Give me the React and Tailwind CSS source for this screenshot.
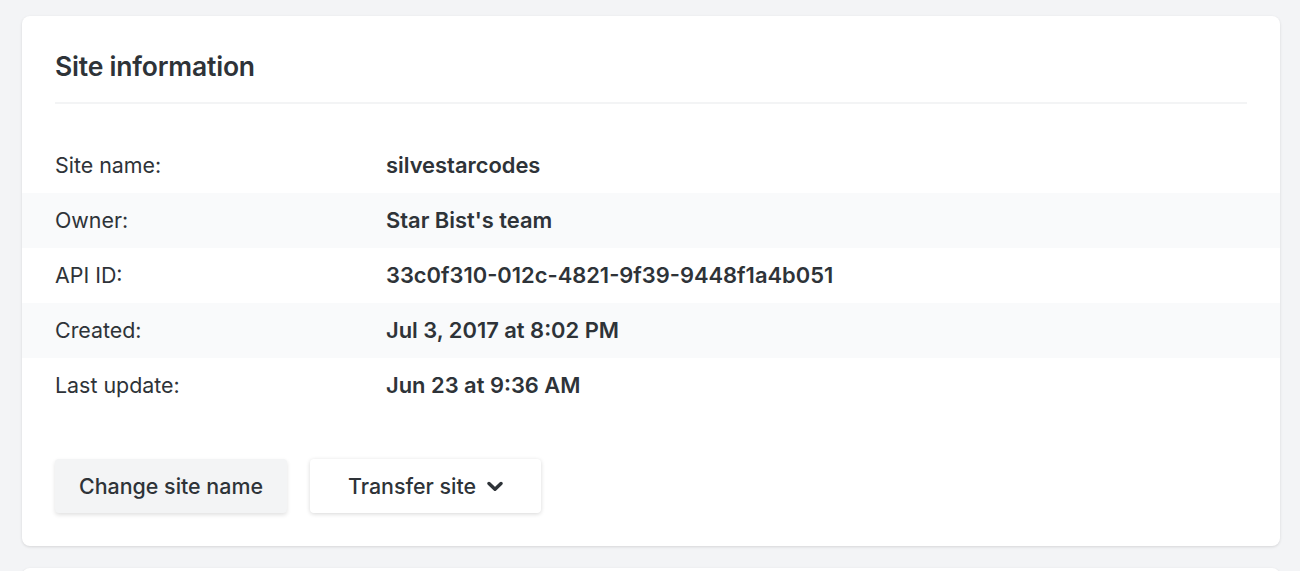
import React from "react";

const rows = [
  ["Site name:", "silvestarcodes"],
  ["Owner:", "Star Bist's team"],
  ["API ID:", "33c0f310-012c-4821-9f39-9448f1a4b051"],
  ["Created:", "Jul 3, 2017 at 8:02 PM"],
  ["Last update:", "Jun 23 at 9:36 AM"],
];

export default function App() {
  return (
    <div
      className="bg-[#f3f4f6] pt-[16px] pl-[22px] pr-[20px] text-[#2e3338] overflow-hidden h-[571px]"
      style={{ fontFamily: 'Inter, "Noto Sans", sans-serif' }}
    >
      <div className="bg-white rounded-[8px] h-[530px] shadow-[0_1px_3px_rgba(0,0,0,0.12)] pt-[34px]">
        <div className="px-[33px]">
          <h2 className="text-[26.5px] leading-[32px] font-semibold tracking-[-0.2px]">Site information</h2>
          <div className="mt-[20px] h-[2px] bg-[#f3f4f5]" />
        </div>
        <div className="mt-[34px]">
          {rows.map(([label, value], i) => (
            <div
              key={label}
              className={`flex items-center h-[55px] px-[33px] ${i % 2 === 1 ? "bg-[#f9fafb]" : ""}`}
            >
              <div className="w-[331px] text-[21.4px]">{label}</div>
              <div className="font-semibold text-[21.9px]">{value}</div>
            </div>
          ))}
        </div>
        <div className="flex gap-[23px] px-[33px] mt-[46px]">
          <button className="h-[54px] w-[232px] rounded-[4px] bg-[#f3f4f5] text-[21.4px] font-medium shadow-[0_2px_4px_rgba(0,0,0,0.12)]">
            Change site name
          </button>
          <button className="h-[54px] w-[231px] rounded-[4px] bg-white text-[21.4px] font-medium shadow-[0_1px_4px_rgba(0,0,0,0.16)] flex items-center justify-center gap-[11px]">
            Transfer site
            <svg width="16" height="11" viewBox="0 0 16 11" fill="none">
              <path d="M2 2.5 L8 8.3 L14 2.5" stroke="#2e3338" strokeWidth="3.4" strokeLinecap="round" strokeLinejoin="round" />
            </svg>
          </button>
        </div>
      </div>
      <div className="mt-[22px] bg-white rounded-t-[8px] h-[40px] shadow-[0_1px_3px_rgba(0,0,0,0.12)]" />
    </div>
  );
}
